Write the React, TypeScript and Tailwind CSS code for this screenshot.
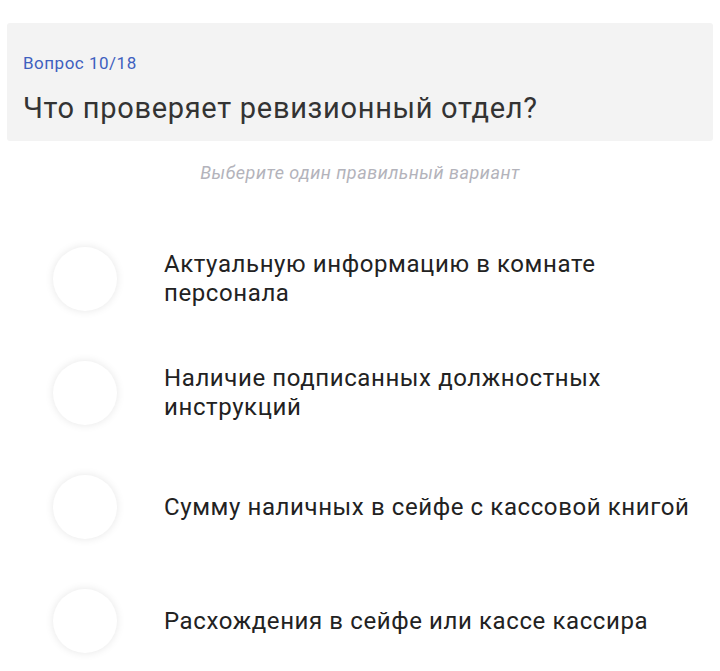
const options = [
  "Актуальную информацию в комнате персонала",
  "Наличие подписанных должностных инструкций",
  "Сумму наличных в сейфе с кассовой книгой",
  "Расхождения в сейфе или кассе кассира",
]

export default function App() {
  return (
    <div className="w-[720px] h-[671px] bg-white overflow-hidden font-['Roboto',sans-serif]">
      <div className="pt-[23px] px-[7px]">
        <div className="bg-[#f3f3f3] rounded-[3px] h-[118px] pl-[16px] pt-[30px]">
          <div className="text-[17px] leading-[20px] tracking-[0.5px] text-[#3e5fbf]">Вопрос 10/18</div>
          <div className="mt-[17px] text-[29px] leading-[36px] tracking-[0.7px] text-[#333]">
            Что проверяет ревизионный отдел?
          </div>
        </div>
      </div>
      <div className="mt-[21px] text-center italic text-[18px] leading-[22px] tracking-[0.5px] text-[#b3b3bb]">
        Выберите один правильный вариант
      </div>
      <div className="mt-[63px] flex flex-col gap-[50px] pl-[53px]">
        {options.map((o) => (
          <div key={o} className="flex items-center gap-[47px]">
            <div className="w-[64px] h-[64px] shrink-0 rounded-full bg-white shadow-[0_0_8px_rgba(0,0,0,0.1)]" />
            <div className="text-[24px] leading-[29px] tracking-[0.6px] text-[#222] w-[540px]">{o}</div>
          </div>
        ))}
      </div>
    </div>
  )
}
